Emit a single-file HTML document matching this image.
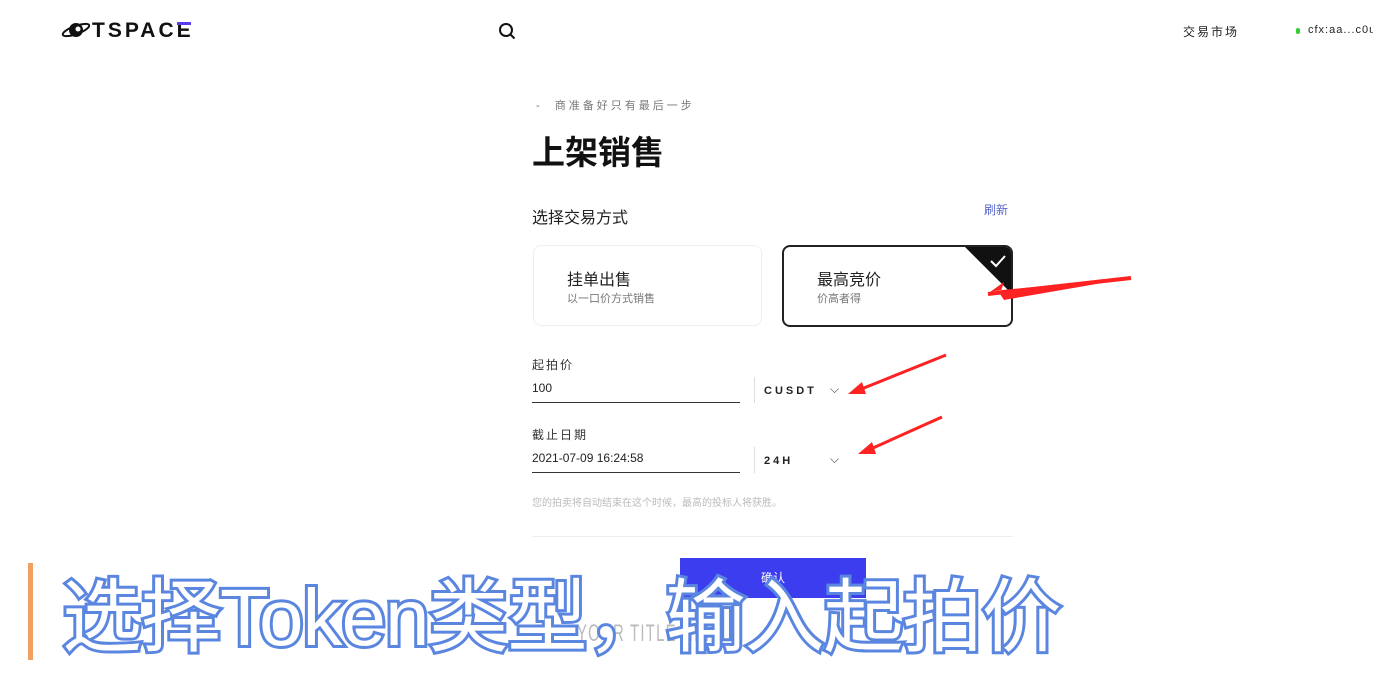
<!DOCTYPE html>
<html><head><meta charset="utf-8"><style>
*{margin:0;padding:0;box-sizing:border-box}
body{width:1373px;height:686px;background:#fff;position:relative;overflow:hidden;font-family:"Liberation Sans","Noto Sans CJK SC",sans-serif;color:#222}
.a{position:absolute}
.card{position:absolute;border-radius:8px;background:#fff}
.sub{font-size:11px;color:#777}
.line{position:absolute;height:1px;background:#333}
</style></head><body>
<div class="a" style="left:60px;top:19px;font-size:21px;font-weight:bold;letter-spacing:3px;color:#111">
<svg width="32" height="20" viewBox="0 0 32 20" style="vertical-align:-3px"><ellipse cx="16" cy="10" rx="14" ry="4" fill="none" stroke="#111" stroke-width="2" transform="rotate(-20 16 10)"/><circle cx="16" cy="10" r="7" fill="#111"/><circle cx="18" cy="9" r="2.5" fill="#fff"/></svg>TSPAC<span style="position:relative">E<span style="position:absolute;left:0;top:3px;width:14px;height:3px;background:#5a3cf0"></span></span></div>
<svg class="a" style="left:498px;top:22px" width="18" height="18" viewBox="0 0 18 18"><circle cx="8" cy="8" r="6" fill="none" stroke="#111" stroke-width="2"/><path d="M12.5 12.5L16.5 16.5" stroke="#111" stroke-width="2"/></svg>
<div class="a" style="left:1183px;top:23px;font-size:12px;letter-spacing:2px">交易市场</div>
<div class="a" style="left:1296px;top:28px;width:4px;height:6px;border-radius:2px;background:#3c3"></div>
<div class="a" style="left:1308px;top:24px;font-size:11px;letter-spacing:1px">cfx:aa...c0u</div>
<div class="a sub" style="left:536px;top:97px;letter-spacing:3px">- &nbsp;商准备好只有最后一步</div>
<div class="a" style="left:532px;top:126px;font-size:33px;font-weight:bold;color:#111">上架销售</div>
<div class="a" style="left:532px;top:204px;font-size:16px">选择交易方式</div>
<div class="a" style="left:984px;top:201px;font-size:12px;color:#5566cc">刷新</div>
<div class="card" style="left:533px;top:245px;width:229px;height:81px;border:1px solid #eee"></div>
<div class="a" style="left:567px;top:266px;font-size:16px">挂单出售</div>
<div class="a sub" style="left:567px;top:290px">以一口价方式销售</div>
<div class="card" style="left:782px;top:245px;width:231px;height:82px;border:2px solid #222;overflow:hidden">
<div class="a" style="right:-1px;top:-1px;width:0;height:0;border-top:48px solid #111;border-left:48px solid transparent"></div>
<svg class="a" style="right:4px;top:7px" width="18" height="14"><path d="M2 7l5 5 9-10" stroke="#fff" stroke-width="2" fill="none"/></svg></div>
<div class="a" style="left:817px;top:266px;font-size:16px">最高竞价</div>
<div class="a sub" style="left:817px;top:290px">价高者得</div>
<svg class="a" style="left:980px;top:270px" width="160" height="40"><path d="M151 8L22 20L10 22L24 12L20 24L24 30Z" fill="#f22"/><path d="M151 8L8 24" stroke="#f22" stroke-width="4"/></svg>
<div class="a sub" style="left:532px;top:356px;font-size:12px;color:#333;letter-spacing:2px">起拍价</div>
<div class="a" style="left:532px;top:381px;font-size:12px">100</div>
<div class="line" style="left:532px;top:402px;width:208px"></div>
<div class="a" style="left:754px;top:377px;width:1px;height:26px;background:#ddd"></div>
<div class="a" style="left:764px;top:385px;font-size:11px;font-weight:bold;letter-spacing:3px">CUSDT</div>
<div class="a" style="left:830px;top:382px;font-size:12px;color:#444">⌵</div>
<div class="a sub" style="left:532px;top:426px;font-size:12px;color:#333;letter-spacing:2px">截止日期</div>
<div class="a" style="left:532px;top:451px;font-size:12px">2021-07-09 16:24:58</div>
<div class="line" style="left:532px;top:472px;width:208px"></div>
<div class="a" style="left:754px;top:447px;width:1px;height:26px;background:#ddd"></div>
<div class="a" style="left:764px;top:455px;font-size:11px;font-weight:bold;letter-spacing:3px">24H</div>
<div class="a" style="left:830px;top:452px;font-size:12px;color:#444">⌵</div>
<svg class="a" style="left:840px;top:350px" width="110" height="130"><path d="M106 5L14 42" stroke="#f22" stroke-width="3"/><path d="M8 44L22 32L26 44Z" fill="#f22"/><path d="M102 67L24 102" stroke="#f22" stroke-width="3"/><path d="M18 104L32 92L36 104Z" fill="#f22"/></svg>
<div class="a" style="left:532px;top:494px;font-size:10px;color:#bbb">您的拍卖将自动结束在这个时候，最高的投标人将获胜。</div>
<div class="a" style="left:532px;top:536px;width:481px;height:1px;background:#eee"></div>
<div class="a" style="left:680px;top:558px;width:186px;height:40px;background:#3d3df0;color:#fff;font-size:12px;text-align:center;line-height:40px">确认</div>
<div class="a" style="left:577px;top:620px;font-size:24px;color:#bbb;letter-spacing:2px;transform:scaleX(0.62);transform-origin:0 0;white-space:nowrap">YOUR TITLE HERE</div>
<div class="a" style="left:28px;top:563px;width:5px;height:97px;background:#f0a060"></div>
<div class="a" style="left:62px;top:568px;font-size:80px;line-height:100px;color:#fff;-webkit-text-stroke:6px #5b86e0;paint-order:stroke fill;white-space:nowrap;letter-spacing:-1px">选择Token类型，输入起拍价</div>
</body></html>
